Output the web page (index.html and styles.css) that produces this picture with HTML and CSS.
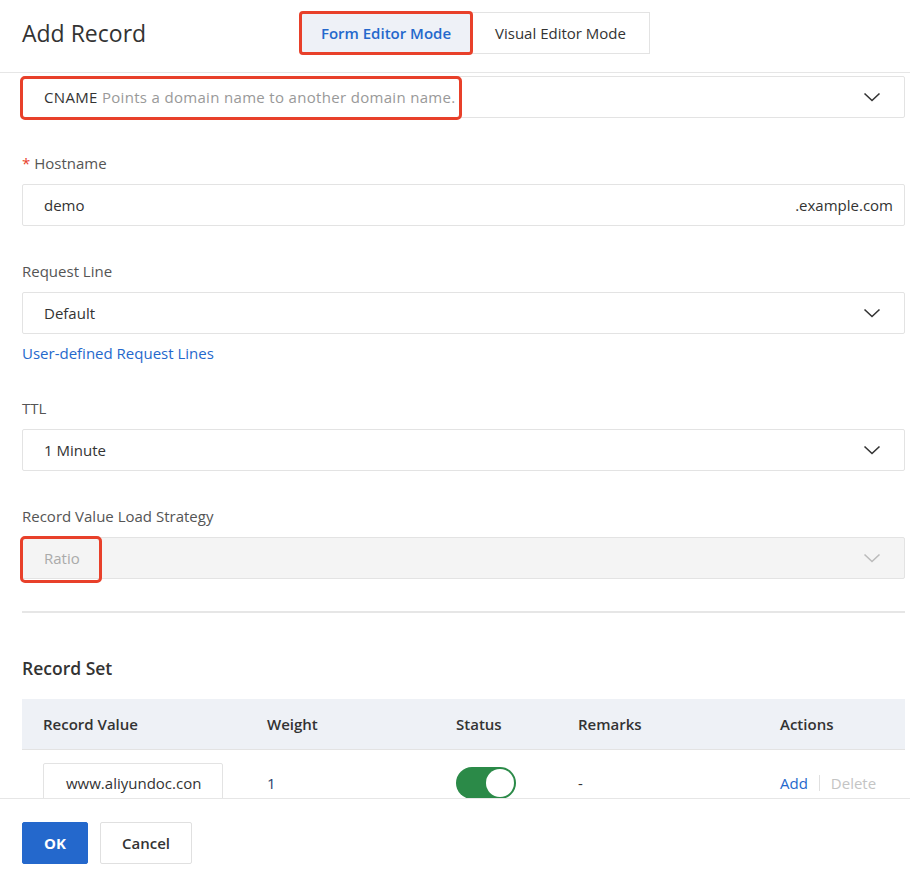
FILE: index.html
```html
<!DOCTYPE html>
<html lang="en">
<head>
<meta charset="utf-8">
<title>Add Record</title>
<link rel="stylesheet" href="styles.css">
</head>
<body>
<div class="dialog">
  <header class="header">
    <h1 class="title">Add Record</h1>
    <div class="segmented">
      <button class="seg seg-active">Form Editor Mode</button>
      <button class="seg">Visual Editor Mode</button>
    </div>
  </header>

  <main class="body">
    <div class="select select-type">
      <span class="value"><span class="type">CNAME</span> <span class="hint">Points a domain name to another domain name.</span></span>
      <svg class="chev" width="18" height="10" viewBox="0 0 18 10"><path d="M1.5 1.5 L9 8.5 L16.5 1.5" fill="none" stroke="#333" stroke-width="1.6"/></svg>
      <span class="hl hl-type"></span>
    </div>

    <div class="field">
      <label class="label"><span class="req">*</span> Hostname</label>
      <div class="input input-host">
        <span class="value">demo</span>
        <span class="suffix">.example.com</span>
      </div>
    </div>

    <div class="field">
      <label class="label">Request Line</label>
      <div class="select">
        <span class="value">Default</span>
        <svg class="chev" width="18" height="10" viewBox="0 0 18 10"><path d="M1.5 1.5 L9 8.5 L16.5 1.5" fill="none" stroke="#333" stroke-width="1.6"/></svg>
      </div>
      <a class="link">User-defined Request Lines</a>
    </div>

    <div class="field field-ttl">
      <label class="label">TTL</label>
      <div class="select">
        <span class="value">1 Minute</span>
        <svg class="chev" width="18" height="10" viewBox="0 0 18 10"><path d="M1.5 1.5 L9 8.5 L16.5 1.5" fill="none" stroke="#333" stroke-width="1.6"/></svg>
      </div>
    </div>

    <div class="field">
      <label class="label">Record Value Load Strategy</label>
      <div class="select select-disabled">
        <span class="value">Ratio</span>
        <svg class="chev" width="18" height="10" viewBox="0 0 18 10"><path d="M1.5 1.5 L9 8.5 L16.5 1.5" fill="none" stroke="#bbb" stroke-width="1.6"/></svg>
        <span class="hl hl-ratio"></span>
      </div>
    </div>

    <hr class="divider">

    <h2 class="section-title">Record Set</h2>

    <div class="table">
      <div class="row row-head">
        <div class="cell">Record Value</div>
        <div class="cell">Weight</div>
        <div class="cell">Status</div>
        <div class="cell">Remarks</div>
        <div class="cell">Actions</div>
      </div>
      <div class="row row-body">
        <div class="cell"><div class="cell-input">www.aliyundoc.con</div></div>
        <div class="cell weight">1</div>
        <div class="cell"><span class="toggle"><span class="knob"></span></span></div>
        <div class="cell">-</div>
        <div class="cell actions"><a class="act">Add</a><span class="sep"></span><span class="act act-disabled">Delete</span></div>
      </div>
    </div>
  </main>

  <footer class="footer">
    <button class="btn btn-primary">OK</button>
    <button class="btn">Cancel</button>
  </footer>
</div>
</body>
</html>
```

FILE: styles.css
```css
* { box-sizing: border-box; }
html, body { margin: 0; padding: 0; background: #fff; }
body {
  font-family: "Open Sans", "Noto Sans", "Liberation Sans", sans-serif;
  font-size: 15px;
  color: #333;
  width: 910px;
  height: 872px;
  overflow: hidden;
}
.dialog { display: flex; flex-direction: column; height: 872px; }

.header {
  height: 73px;
  flex: none;
  display: flex;
  align-items: flex-start;
  padding: 12px 0 0 22px;
  border-bottom: 1px solid #e6e6e6;
}
.title {
  margin: 0;
  font-size: 23px;
  font-weight: 400;
  line-height: 42px;
  color: #333;
  width: 278px;
}
.segmented { display: flex; }
.seg {
  font-family: inherit;
  font-size: 15px;
  height: 42px;
  padding: 0;
  border: 1px solid #e3e3e3;
  background: #fff;
  color: #333;
  cursor: pointer;
}
.seg + .seg { border-left: none; width: 178px; }
.seg-active {
  width: 172px;
  background: #eef1f7;
  color: #2468cc;
  font-weight: 600;
  border-radius: 3px;
  outline: 3px solid #e8402a;
  outline-offset: -2px;
  position: relative;
  z-index: 1;
}

.body {
  flex: 1;
  overflow: hidden;
  padding: 3px 5px 0 22px;
}

.select, .input {
  position: relative;
  height: 42px;
  border: 1px solid #e3e3e3;
  border-radius: 2px;
  display: flex;
  align-items: center;
  padding: 0 22px 0 21px;
  background: #fff;
}
.select { justify-content: space-between; }
.value { color: #333; }
.select-type .value { letter-spacing: 0.32px; }
.hint { color: #999; }
.chev { flex: none; margin-right: 1px; }
.select-disabled { background: #f4f4f4; }
.select-disabled .value { color: #aaa; }

.hl {
  position: absolute;
  border: 3px solid #e8402a;
  border-radius: 5px;
  pointer-events: none;
}
.hl-type { left: -3px; top: -1px; width: 442px; height: 44px; }
.hl-ratio { left: -3px; top: -2px; width: 82px; height: 47px; }

.field { margin-top: 35px; }
.label {
  display: block;
  line-height: 20px;
  color: #555;
  margin-bottom: 11px;
  margin-top: 1px;
}
.req { color: #e8402a; }
.input-host { justify-content: space-between; padding-right: 11px; }
.suffix { color: #333; }
.link {
  display: block;
  margin-top: 9px;
  line-height: 20px;
  color: #2468cc;
}
.field-ttl { margin-top: 35px; }

.divider {
  margin: 32px 0 0;
  border: none;
  border-top: 2px solid #e6e6e6;
}
.section-title {
  margin: 43px 0 0;
  font-size: 17.5px;
  font-weight: 600;
  line-height: 24px;
  color: #333;
}
.table { margin-top: 19px; }
.row {
  display: grid;
  grid-template-columns: 224px 189px 122px 202px 146px;
}
.row-head {
  background: #eef1f6;
  height: 51px;
  align-items: center;
  font-weight: 600;
  border-bottom: 1px solid #e3e3e3;
}
.cell { padding-left: 21px; }
.row-body { align-items: center; height: 60px; padding-top: 6px; }
.cell-input {
  width: 180px;
  height: 40px;
  border: 1px solid #e3e3e3;
  border-radius: 2px;
  display: flex;
  align-items: center;
  padding-left: 22px;
  color: #333;
  white-space: nowrap;
  overflow: hidden;
}
.weight { color: #2b3f6b; }
.toggle {
  display: inline-block;
  width: 60px;
  height: 32px;
  border-radius: 16px;
  background: #2b8a48;
  padding: 2px;
  vertical-align: middle;
}
.knob {
  display: block;
  width: 28px;
  height: 28px;
  border-radius: 50%;
  background: #fff;
  margin-left: 28px;
}
.actions { display: flex; align-items: center; }
.act { color: #2468cc; }
.act-disabled { color: #c4c4c4; }
.sep {
  display: inline-block;
  width: 1px;
  height: 16px;
  background: #e0e0e0;
  margin: 0 11px;
}

.footer {
  flex: none;
  height: 74px;
  border-top: 1px solid #e6e6e6;
  background: #fff;
  display: flex;
  gap: 12px;
  padding: 23px 0 0 22px;
}
.btn {
  font-family: inherit;
  font-size: 15px;
  height: 42px;
  padding: 0;
  border: 1px solid #e0e0e0;
  border-radius: 2px;
  background: #fff;
  color: #333;
  font-weight: 600;
}
.btn-primary {
  background: #2468cc;
  border-color: #2468cc;
  color: #fff;
  width: 66px;
  font-weight: 700;
}
.btn + .btn { width: 92px; }
```
